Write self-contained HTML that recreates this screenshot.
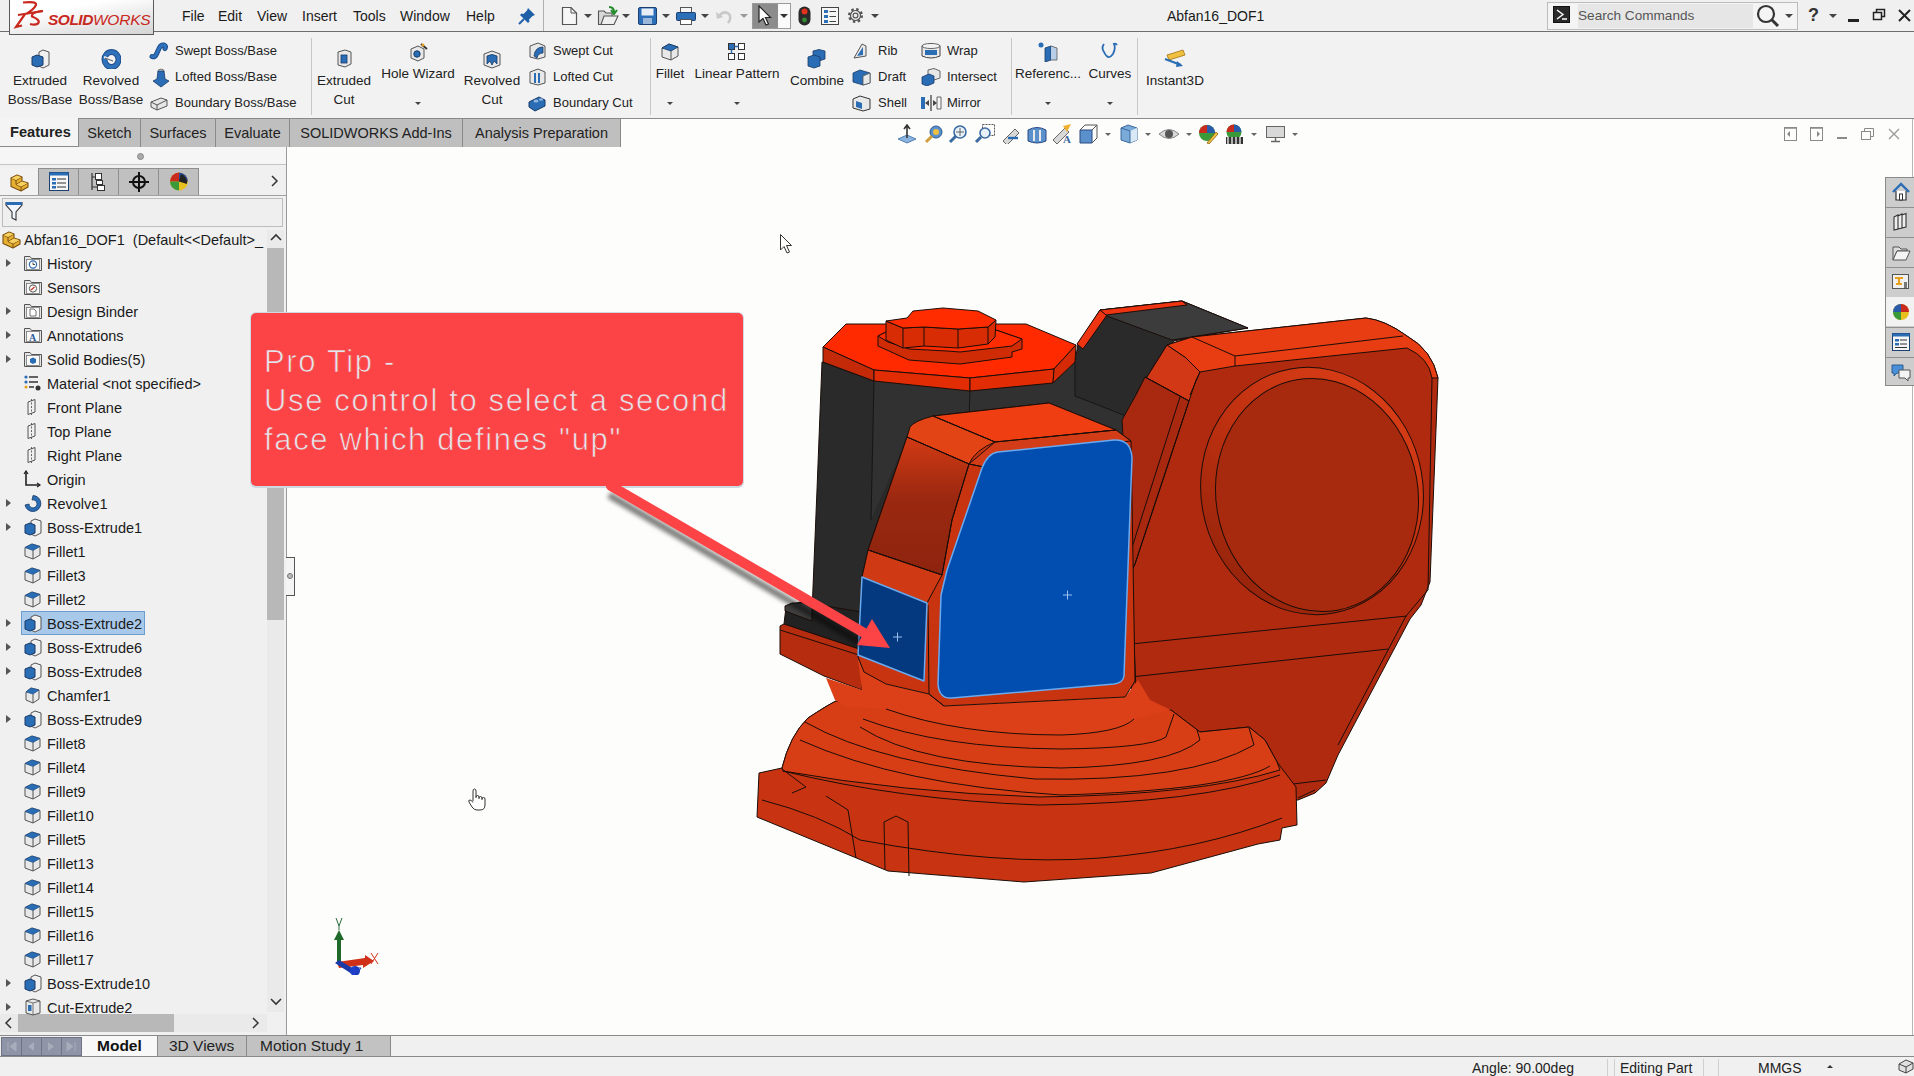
<!DOCTYPE html>
<html><head><meta charset="utf-8">
<style>
*{margin:0;padding:0;box-sizing:border-box}
html,body{width:1914px;height:1076px;overflow:hidden;background:#fdfdfb;font-family:"Liberation Sans",sans-serif;color:#1a1a1a}
.a{position:absolute;white-space:nowrap}
#top{position:absolute;left:0;top:0;width:1914px;height:32px;background:#f0f0f0;border-bottom:1px solid #6e6e6e}
#cm{position:absolute;left:0;top:32px;width:1914px;height:87px;background:#f2f2f2;border-bottom:1px solid #8a8a8a}
.mi{font-size:14px;top:8px}
.lbl{font-size:13.5px;color:#222;text-align:center;line-height:19px}
.sep{position:absolute;width:1px;background:#c8c8c8}
#tabs{position:absolute;left:0;top:118px;width:1914px;height:29px}
.tab{position:absolute;top:0;height:29px;background:#bfbfbf;border-right:1px solid #a8a8a8;font-size:14.5px;line-height:28px;text-align:center;color:#222}
#left{position:absolute;left:0;top:147px;width:287px;height:888px;background:#f0f0f0;border-right:1px solid #9a9a9a}
.ti{position:absolute;left:47px;font-size:14.5px;line-height:18px;color:#1a1a1a}
.ex{position:absolute;left:6px;width:0;height:0;border-left:5px solid #555;border-top:4px solid transparent;border-bottom:4px solid transparent}
#vp{position:absolute;left:287px;top:118px;width:1627px;height:917px;background:#fdfdfb}
#btabs{position:absolute;left:0;top:1035px;width:1914px;height:22px;background:#f0f0f0;border-top:1px solid #8a8a8a;border-bottom:1px solid #8a8a8a}
#status{position:absolute;left:0;top:1057px;width:1914px;height:19px;background:#f0f0f0}
</style></head><body>
<div id="vp"></div>
<div id="top">
<div class="a" style="left:9px;top:0;width:145px;height:35px;border:1px solid #5a5a5a;border-top:none;background:linear-gradient(170deg,#ffffff 30%,#e6e6e6 70%,#d4d4d4);z-index:3"></div>
<svg class="a" style="left:0;top:0;z-index:4" width="48" height="32" viewBox="0 0 48 32"><path d="M23 2.5 Q37 1 36 5 Q34 9 27 13.5" fill="none" stroke="#c8281e" stroke-width="2.2"/><path d="M18 15 L43 11" fill="none" stroke="#c8281e" stroke-width="2"/><path d="M25 14 L16 27 L22 25.5" fill="none" stroke="#c8281e" stroke-width="2.2"/><path d="M43 11 Q31 12 32 16.5 Q41 20 38 23.5 Q35 25.5 30 24" fill="none" stroke="#c8281e" stroke-width="2.2"/></svg>
<div class="a" style="left:48px;top:12px;z-index:4;font-size:15.5px;line-height:16px;color:#c8281e;font-style:italic;letter-spacing:-0.2px"><b style="letter-spacing:-0.5px">SOLID</b><span style="font-weight:normal">WORKS</span></div>
<div class="a mi" style="left:182px">File</div>
<div class="a mi" style="left:218px">Edit</div>
<div class="a mi" style="left:257px">View</div>
<div class="a mi" style="left:302px">Insert</div>
<div class="a mi" style="left:353px">Tools</div>
<div class="a mi" style="left:400px">Window</div>
<div class="a mi" style="left:466px">Help</div>
<svg class="a" style="left:517px;top:6px" width="20" height="20"><path d="M11 2 L18 9 L15.5 10 L12 13.5 L12.5 15.5 L11 17 L3 9 L4.5 7.5 L6.5 8 L10 4.5 Z" fill="#1f5fa8"/><path d="M7 13 L2 18" stroke="#1f5fa8" stroke-width="2"/></svg>
<div class="sep" style="left:543px;top:0;height:31px;background:#b0b0b0"></div>

<svg class="a" style="left:561px;top:6px" width="17" height="20"><path d="M1.5 1.5 H10 L15.5 7 V18.5 H1.5 Z" fill="#f6f6f6" stroke="#555" stroke-width="1.2"/><path d="M10 1.5 V7 H15.5" fill="none" stroke="#555"/></svg>
<div class="a" style="left:584px;top:14px;border-left:4px solid transparent;border-right:4px solid transparent;border-top:4px solid #444"></div>
<svg class="a" style="left:597px;top:6px" width="22" height="20"><path d="M1.5 5 H7 L9 7 H15 V18.5 H1.5 Z" fill="#d8d8d8" stroke="#555" stroke-width="1.1"/><path d="M4 18.5 L7 10 H21 L17 18.5 Z" fill="#efefef" stroke="#555" stroke-width="1.1"/><path d="M12 1 Q17 1 17 6 M14 4 L17 8 L20 4" fill="none" stroke="#1e8a2a" stroke-width="2"/></svg>
<div class="a" style="left:622px;top:14px;border-left:4px solid transparent;border-right:4px solid transparent;border-top:4px solid #444"></div>
<svg class="a" style="left:638px;top:7px" width="19" height="18"><rect x="0.5" y="0.5" width="18" height="17" rx="1.5" fill="#2a6fb8" stroke="#1a3f70"/><rect x="3.5" y="1.5" width="12" height="7" fill="#e8eef6"/><rect x="5" y="11" width="9" height="6" fill="#9ab6d8"/></svg>
<div class="a" style="left:662px;top:14px;border-left:4px solid transparent;border-right:4px solid transparent;border-top:4px solid #444"></div>
<svg class="a" style="left:676px;top:7px" width="20" height="18"><rect x="4.5" y="0.5" width="11" height="5" fill="#f4f4f4" stroke="#555"/><rect x="0.5" y="5.5" width="19" height="8" rx="1" fill="#2a6fb8" stroke="#1a3f70"/><rect x="4.5" y="12.5" width="11" height="5" fill="#fff" stroke="#555"/></svg>
<div class="a" style="left:701px;top:14px;border-left:4px solid transparent;border-right:4px solid transparent;border-top:4px solid #444"></div>
<svg class="a" style="left:715px;top:8px" width="17" height="16"><path d="M4 8 Q9 2 14 6 Q17 10 13 15" fill="none" stroke="#c8c8c8" stroke-width="2.5"/><path d="M1 4 L2 11 L8 9 Z" fill="#c8c8c8"/></svg>
<div class="a" style="left:740px;top:14px;border-left:4px solid transparent;border-right:4px solid transparent;border-top:4px solid #999"></div>
<div class="a" style="left:752px;top:3px;width:39px;height:26px;border:1px solid #9a9a9a;background:#fafafa"></div>
<div class="a" style="left:753px;top:4px;width:25px;height:24px;background:#8c8c8c"></div>
<svg class="a" style="left:757px;top:5px" width="16" height="22"><path d="M2 1 L2 17 L6 13.5 L9 20 L11.5 19 L8.5 12.5 L13.5 12.5 Z" fill="#fff" stroke="#222" stroke-width="1.2"/></svg>
<div class="a" style="left:780px;top:14px;border-left:4px solid transparent;border-right:4px solid transparent;border-top:4px solid #333"></div>
<svg class="a" style="left:798px;top:6px" width="13" height="20"><rect x="0.5" y="0.5" width="12" height="19" rx="6" fill="#2a2a2a"/><circle cx="6.5" cy="5.5" r="3" fill="#e0301e"/><circle cx="6.5" cy="14" r="2.4" fill="#2f8a30"/></svg>
<svg class="a" style="left:821px;top:7px" width="18" height="18"><rect x="0.5" y="0.5" width="17" height="17" fill="#f6f6f6" stroke="#444"/><rect x="3" y="3" width="4" height="3" fill="#2a6fb8"/><rect x="3" y="8" width="4" height="3" fill="#2a6fb8"/><rect x="3" y="13" width="4" height="3" fill="#2a6fb8"/><path d="M8.5 4.5 H15 M8.5 9.5 H15 M8.5 14.5 H15" stroke="#444"/></svg>
<svg class="a" style="left:846px;top:6px" width="19" height="19"><circle cx="9.5" cy="9.5" r="6.2" fill="none" stroke="#555" stroke-width="2.6" stroke-dasharray="2.4 2.46"/><circle cx="9.5" cy="9.5" r="5" fill="none" stroke="#555" stroke-width="1.2"/><circle cx="9.5" cy="9.5" r="2.4" fill="none" stroke="#555" stroke-width="1.2"/></svg>
<div class="a" style="left:871px;top:14px;border-left:4px solid transparent;border-right:4px solid transparent;border-top:4px solid #444"></div>

<div class="a" style="left:1167px;top:8px;font-size:14px">Abfan16_DOF1</div>
<div class="a" style="left:1547px;top:2px;width:251px;height:28px;border:1px solid #bcbcbc;background:#f4f4f4"></div>
<div class="a" style="left:1578px;top:4px;width:175px;height:24px;background:#e6e6e6"></div>
<div class="a" style="left:1553px;top:6px;width:17px;height:17px;background:#2a2a2a;border:1px solid #111"></div>
<svg class="a" style="left:1553px;top:6px" width="17" height="17"><path d="M4 4 L10 8.5 L4 13 M9 13 L14 13" stroke="#fff" stroke-width="1.4" fill="none"/></svg>
<div class="a" style="left:1578px;top:8px;font-size:13.6px;color:#555">Search Commands</div>
<svg class="a" style="left:1755px;top:3px" width="28" height="26"><circle cx="11" cy="11" r="8" fill="none" stroke="#333" stroke-width="2.2"/><path d="M17 17 L23 23" stroke="#333" stroke-width="3"/></svg>
<div class="a" style="left:1785px;top:14px;border-left:4px solid transparent;border-right:4px solid transparent;border-top:4px solid #444"></div>
<div class="a" style="left:1808px;top:5px;font-size:18px;font-weight:bold;color:#333">?</div>
<div class="a" style="left:1829px;top:14px;border-left:4px solid transparent;border-right:4px solid transparent;border-top:4px solid #444"></div>
<div class="a" style="left:1848px;top:19px;width:11px;height:3px;background:#222"></div>
<svg class="a" style="left:1872px;top:8px" width="16" height="14"><rect x="1.5" y="4.5" width="8" height="7" fill="none" stroke="#222" stroke-width="1.5"/><path d="M4.5 4.5 V1.5 H12.5 V8.5 H9.5" fill="none" stroke="#222" stroke-width="1.5"/></svg>
<svg class="a" style="left:1898px;top:9px" width="14" height="14"><path d="M1 1 L12 12 M12 1 L1 12" stroke="#222" stroke-width="2"/></svg>
</div>
<div id="cm"></div>
<svg class="a" style="left:31px;top:49px" width="20" height="20"><path d="M8 3 L12 1 L18 3 V16 L12 19 L8 17 Z" fill="#f0f0f0" stroke="#555" stroke-width="1"/><path d="M1 8 L6 6 L12 8 V16 L6 18 L1 16 Z" fill="#2a6db5" stroke="#173a66" stroke-width="1"/></svg>
<div class="a lbl" style="left:-20px;top:71px;width:120px">Extruded</div>
<div class="a lbl" style="left:-20px;top:90px;width:120px">Boss/Base</div>
<svg class="a" style="left:101px;top:49px" width="20" height="20"><ellipse cx="10.5" cy="10.5" rx="7" ry="7.5" fill="none" stroke="#1d4f8a" stroke-width="6"/><ellipse cx="10.5" cy="10.5" rx="7" ry="7.5" fill="none" stroke="#2f72bb" stroke-width="4"/><path d="M3 8 L13 12" stroke="#f2f2f2" stroke-width="2.2"/><path d="M4 9 L12 12" stroke="#333" stroke-width="0.8"/></svg>
<div class="a lbl" style="left:51px;top:71px;width:120px">Revolved</div>
<div class="a lbl" style="left:51px;top:90px;width:120px">Boss/Base</div>
<svg class="a" style="left:149px;top:42px" width="20" height="18"><path d="M3 14.5 Q6 16 8 11 L10.5 5.5 Q12 2.5 15 3 Q17.5 4 16 6.5" fill="none" stroke="#1d4f8a" stroke-width="5" stroke-linecap="round"/><path d="M3 14.5 Q6 16 8 11 L10.5 5.5 Q12 2.5 15 3 Q17.5 4 16 6.5" fill="none" stroke="#2f72bb" stroke-width="3" stroke-linecap="round"/></svg>
<div class="a" style="left:175px;top:43px;font-size:13px;color:#222">Swept Boss/Base</div>
<svg class="a" style="left:152px;top:68px" width="18" height="20"><ellipse cx="9" cy="3" rx="3" ry="1.8" fill="#e0e0e0" stroke="#555" stroke-width="0.8"/><path d="M6 3 L5 11 L1 13 L9 19 L17 13 L13 11 L12 3 Z" fill="#2a6db5" stroke="#173a66" stroke-width="0.8"/></svg>
<div class="a" style="left:175px;top:69px;font-size:13px;color:#222">Lofted Boss/Base</div>
<svg class="a" style="left:149px;top:94px" width="20" height="18"><path d="M2 8 L12 4 L18 6 V12 L8 16 L2 13 Z" fill="#e6e6e6" stroke="#555" stroke-width="1"/><path d="M2 8 L8 11 L18 6 M8 11 V16" fill="none" stroke="#555"/></svg>
<div class="a" style="left:175px;top:95px;font-size:13px;color:#222">Boundary Boss/Base</div>
<div class="sep" style="left:311px;top:38px;height:77px"></div>
<svg class="a" style="left:335px;top:49px" width="18" height="19"><path d="M3 3 L10 1 L16 3 V15 L10 18 L3 16 Z" fill="#e8e8e8" stroke="#555"/><rect x="6" y="6" width="6" height="8" fill="#2a6db5" stroke="#173a66" stroke-width="0.8"/></svg>
<div class="a lbl" style="left:284px;top:71px;width:120px">Extruded</div>
<div class="a lbl" style="left:284px;top:90px;width:120px">Cut</div>
<svg class="a" style="left:408px;top:42px" width="20" height="21"><path d="M3 7 L10 4 L16 7 V16 L10 19 L3 16 Z" fill="#e8e8e8" stroke="#555"/><circle cx="9" cy="12" r="3.2" fill="#2a6db5" stroke="#173a66"/><path d="M13 2 L19 7" stroke="#333" stroke-width="2"/><circle cx="15" cy="3" r="1.5" fill="#e8a020"/></svg>
<div class="a lbl" style="left:358px;top:64px;width:120px">Hole Wizard</div>
<div class="a" style="left:415px;top:102px;border-left:3px solid transparent;border-right:3px solid transparent;border-top:3px solid #444"></div>
<svg class="a" style="left:482px;top:49px" width="20" height="20"><path d="M2 5 L10 2 L18 5 V16 L10 19 L2 16 Z" fill="#e8e8e8" stroke="#555"/><path d="M5 7 Q10 4 15 7 V15 L12 12 L10 16 L8 12 L5 15 Z" fill="#2a6db5" stroke="#173a66" stroke-width="0.8"/></svg>
<div class="a lbl" style="left:432px;top:71px;width:120px">Revolved</div>
<div class="a lbl" style="left:432px;top:90px;width:120px">Cut</div>
<svg class="a" style="left:528px;top:42px" width="19" height="18"><path d="M2 4 L10 1 L17 4 V15 L10 17 L2 15 Z" fill="#e8e8e8" stroke="#555"/><path d="M6 14 Q7 5 15 5 V11 Q10 11 9 16 Z" fill="#2a6db5" stroke="#173a66" stroke-width="0.8"/></svg>
<div class="a" style="left:553px;top:43px;font-size:13px;color:#222">Swept Cut</div>
<svg class="a" style="left:528px;top:68px" width="19" height="18"><path d="M2 4 L10 1 L17 4 V15 L10 17 L2 15 Z" fill="#e8e8e8" stroke="#555"/><path d="M7 5 V15 M11 5 V15" stroke="#2a6db5" stroke-width="2"/></svg>
<div class="a" style="left:553px;top:69px;font-size:13px;color:#222">Lofted Cut</div>
<svg class="a" style="left:527px;top:94px" width="20" height="18"><path d="M2 8 L12 3 L18 6 V12 L8 17 L2 13 Z" fill="#2a6db5" stroke="#173a66" stroke-width="1"/><ellipse cx="9" cy="7" rx="2.5" ry="1.5" fill="#8fb6e0"/><ellipse cx="14" cy="5.5" rx="2" ry="1.2" fill="#8fb6e0"/></svg>
<div class="a" style="left:553px;top:95px;font-size:13px;color:#222">Boundary Cut</div>
<div class="sep" style="left:650px;top:38px;height:77px"></div>
<svg class="a" style="left:660px;top:42px" width="20" height="20"><path d="M2 6 L9 2 L18 5 V14 L11 18 L2 15 Z" fill="#e8e8e8" stroke="#555"/><path d="M2 6 L11 9 L18 5 L9 2 Z" fill="#2a6db5" stroke="#173a66" stroke-width="0.8"/><path d="M11 9 V18" stroke="#555"/></svg>
<div class="a lbl" style="left:610px;top:64px;width:120px">Fillet</div>
<div class="a" style="left:667px;top:102px;border-left:3px solid transparent;border-right:3px solid transparent;border-top:3px solid #444"></div>
<svg class="a" style="left:727px;top:42px" width="20" height="20"><rect x="1.5" y="1.5" width="6" height="6" fill="#2a6db5" stroke="#333"/><rect x="11.5" y="1.5" width="6" height="6" fill="#fff" stroke="#333"/><rect x="1.5" y="11.5" width="6" height="6" fill="#fff" stroke="#333"/><rect x="11.5" y="11.5" width="6" height="6" fill="#fff" stroke="#333"/><path d="M7.5 4.5 H11.5 M4.5 7.5 V11.5" stroke="#2a6db5" stroke-width="1.5"/></svg>
<div class="a lbl" style="left:677px;top:64px;width:120px">Linear Pattern</div>
<div class="a" style="left:734px;top:102px;border-left:3px solid transparent;border-right:3px solid transparent;border-top:3px solid #444"></div>
<svg class="a" style="left:807px;top:49px" width="20" height="20"><path d="M6 2 L12 0.5 L18 2 V10 L12 12 L6 10 Z" fill="#2a6db5" stroke="#173a66" stroke-width="0.8"/><path d="M1 8 L7 6 L13 8 V17 L7 19 L1 17 Z" fill="#2a6db5" stroke="#173a66" stroke-width="0.8"/></svg>
<div class="a lbl" style="left:757px;top:71px;width:120px">Combine</div>
<svg class="a" style="left:852px;top:42px" width="20" height="18"><path d="M2 16 L10 2 L14 4 L14 14 Z" fill="#e8e8e8" stroke="#555"/><path d="M5 14 L11 5 V13 Z" fill="#2a6db5"/></svg>
<div class="a" style="left:878px;top:43px;font-size:13px;color:#222">Rib</div>
<svg class="a" style="left:852px;top:68px" width="20" height="18"><path d="M1 5 L8 2 L18 5 V15 L11 17 L1 14 Z" fill="#2a6db5" stroke="#173a66" stroke-width="0.8"/><path d="M11 8 L18 5 V15 L11 17 Z" fill="#e8e8e8" stroke="#555" stroke-width="0.8"/></svg>
<div class="a" style="left:878px;top:69px;font-size:13px;color:#222">Draft</div>
<svg class="a" style="left:852px;top:94px" width="20" height="18"><path d="M1 5 L8 2 L18 5 V15 L11 17 L1 14 Z" fill="#e8e8e8" stroke="#333" stroke-width="1"/><path d="M4 7 L10 9 V15 L4 13 Z" fill="#2a6db5"/></svg>
<div class="a" style="left:878px;top:95px;font-size:13px;color:#222">Shell</div>
<svg class="a" style="left:920px;top:42px" width="22" height="18"><path d="M2 4 Q11 0 20 4 V14 Q11 18 2 14 Z" fill="#e8e8e8" stroke="#444"/><ellipse cx="11" cy="4" rx="9" ry="2.5" fill="#f4f4f4" stroke="#444" stroke-width="0.8"/><rect x="5" y="8" width="12" height="5" fill="#2a6db5"/></svg>
<div class="a" style="left:947px;top:43px;font-size:13px;color:#222">Wrap</div>
<svg class="a" style="left:920px;top:68px" width="22" height="18"><path d="M8 2 L14 0.5 L20 3 V10 L14 12 L8 10 Z" fill="#e8e8e8" stroke="#444" stroke-width="0.8"/><path d="M2 9 L9 6 L14 8 V15 L7 18 L2 16 Z" fill="#2a6db5" stroke="#173a66" stroke-width="0.8"/></svg>
<div class="a" style="left:947px;top:69px;font-size:13px;color:#222">Intersect</div>
<svg class="a" style="left:920px;top:94px" width="22" height="18"><path d="M1 3 H5 V15 H1 Z" fill="#2a6db5"/><path d="M17 3 H21 V15 H17 Z" fill="#f4f4f4" stroke="#444" stroke-width="0.8"/><path d="M11 1 V17" stroke="#333" stroke-width="1.2"/><path d="M5 9 L9 6 V12 Z M17 9 L13 6 V12 Z" fill="#444"/></svg>
<div class="a" style="left:947px;top:95px;font-size:13px;color:#222">Mirror</div>
<div class="sep" style="left:1011px;top:38px;height:77px"></div>
<svg class="a" style="left:1037px;top:42px" width="22" height="20"><circle cx="4" cy="3" r="2.5" fill="#2a6db5"/><path d="M8 6 L14 4 V18 L8 20 Z" fill="#2a6db5" stroke="#173a66" stroke-width="0.8"/><path d="M14 4 L20 6 V18 L14 18" fill="#b8cde6" stroke="#555" stroke-width="0.8"/></svg>
<div class="a lbl" style="left:988px;top:64px;width:120px">Referenc...</div>
<div class="a" style="left:1045px;top:102px;border-left:3px solid transparent;border-right:3px solid transparent;border-top:3px solid #444"></div>
<svg class="a" style="left:1099px;top:42px" width="22" height="20"><path d="M5 2 Q2 6 5 10 Q9 19 14 12 Q17 6 15 2 M14 2 Q17 1 18 3" fill="none" stroke="#2a6db5" stroke-width="1.8"/></svg>
<div class="a lbl" style="left:1050px;top:64px;width:120px">Curves</div>
<div class="a" style="left:1107px;top:102px;border-left:3px solid transparent;border-right:3px solid transparent;border-top:3px solid #444"></div>
<div class="sep" style="left:1137px;top:38px;height:77px"></div>
<svg class="a" style="left:1163px;top:49px" width="24" height="20"><path d="M4 6 L20 1 L22 6 L6 11 Z" fill="#f0c040" stroke="#a07010" stroke-width="0.8"/><path d="M2 10 L18 16" stroke="#2a6db5" stroke-width="2.2"/><path d="M14 12 L20 17 L13 18 Z" fill="#2a6db5"/></svg>
<div class="a lbl" style="left:1115px;top:71px;width:120px">Instant3D</div>
<div id="tabs">
<div class="a" style="left:0;top:28px;width:621px;height:1px;background:#8a8a8a"></div>
<div class="a" style="left:0;top:0;width:78px;height:28px;background:#f4f4f4"></div>
<div class="a" style="left:10px;top:6px;font-size:14.6px;font-weight:bold;color:#222">Features</div>
<div class="tab" style="left:78px;width:63px;border-left:1px solid #8a8a8a;border-top:1px solid #8a8a8a">Sketch</div>
<div class="tab" style="left:140px;width:76px;border-top:1px solid #8a8a8a;border-left:1px solid #8a8a8a">Surfaces</div>
<div class="tab" style="left:215px;width:75px;border-top:1px solid #8a8a8a;border-left:1px solid #8a8a8a">Evaluate</div>
<div class="tab" style="left:289px;width:174px;border-top:1px solid #8a8a8a;border-left:1px solid #8a8a8a">SOLIDWORKS Add-Ins</div>
<div class="tab" style="left:462px;width:159px;border-top:1px solid #8a8a8a;border-left:1px solid #8a8a8a;border-right:1px solid #8a8a8a">Analysis Preparation</div>
</div>
<div id="left">
<div class="a" style="left:0;top:0;width:286px;height:18px;background:#f6f6f6;border-bottom:1px solid #c4c4c4"></div>
<div class="a" style="left:137px;top:6px;width:7px;height:7px;border-radius:50%;background:#aaa;border:1px solid #888"></div>
<div class="a" style="left:0;top:48px;width:286px;height:1px;background:#a0a0a0"></div>
<div class="a" style="left:0;top:21px;width:38px;height:27px;background:#f2f2f2"></div>
<div class="a" style="left:38px;top:21px;width:161px;height:27px;background:#c0c0c0;border:1px solid #8f8f8f;border-bottom:none"></div>
<div class="a" style="left:78px;top:21px;width:1px;height:27px;background:#8f8f8f"></div>
<div class="a" style="left:118px;top:21px;width:1px;height:27px;background:#8f8f8f"></div>
<div class="a" style="left:158px;top:21px;width:1px;height:27px;background:#8f8f8f"></div>
<div class="a" style="left:2px;top:51px;width:281px;height:29px;background:#efefef;border:1px solid #bdbdbd"></div>
<div class="a" style="left:267px;top:83px;width:17px;height:782px;background:#eaeaea"></div>
<div class="a" style="left:267px;top:101px;width:17px;height:372px;background:#b8b8b8"></div>
<div class="a" style="left:0;top:867px;width:267px;height:18px;background:#eaeaea"></div>
<div class="a" style="left:18px;top:867px;width:156px;height:18px;background:#b8b8b8"></div>
</div>
<svg class="a" style="left:9px;top:171px" width="22" height="22"><path d="M2 7 L8 4 L13 6 V10 L19 12 V16 L12 20 L2 15.5 Z" fill="#e8b030" stroke="#7a5010" stroke-width="1.1" stroke-linejoin="round"/><path d="M2 7 L7 9.5 L13 6 M7 9.5 V13.5 L13 10 M7 13.5 L12 16 L19 12 M12 16 V20" fill="none" stroke="#7a5010" stroke-width="1"/><path d="M2.5 7.3 L8 4.5 L12.5 6.3 L7 9 Z M7.5 13.6 L13 10.4 L18.5 12.2 L12 15.6 Z" fill="#f6d060"/></svg>
<svg class="a" style="left:49px;top:172px" width="20" height="19"><rect x="0.5" y="0.5" width="19" height="18" fill="#f6f6f6" stroke="#1a3f70"/><rect x="0.5" y="0.5" width="19" height="3" fill="#2a6db5"/><rect x="3" y="6" width="4" height="2.5" fill="#2a6db5"/><rect x="3" y="10" width="4" height="2.5" fill="#2a6db5"/><rect x="3" y="14" width="4" height="2.5" fill="#2a6db5"/><path d="M8 7 H17 M8 11 H17 M8 15 H17" stroke="#333"/></svg>
<svg class="a" style="left:90px;top:172px" width="16" height="20"><path d="M2 1 V18 M2 5 H6 M2 15 H7" stroke="#333" stroke-width="1.2" fill="none"/><rect x="5.5" y="1.5" width="6" height="6" fill="#fff" stroke="#333"/><rect x="6.5" y="8.5" width="6" height="4" fill="#fff" stroke="#333"/><rect x="7.5" y="13.5" width="7" height="5" fill="#fff" stroke="#333"/></svg>
<svg class="a" style="left:129px;top:172px" width="20" height="20"><circle cx="10" cy="10" r="6" fill="none" stroke="#111" stroke-width="2"/><path d="M10 0 V20 M0 10 H20" stroke="#111" stroke-width="2"/></svg>
<svg class="a" style="left:169px;top:171px" width="20" height="21"><circle cx="10" cy="10.5" r="9" fill="#e8c020"/><path d="M10 10.5 L1 10.5 A9 9 0 0 1 10 1.5 Z" fill="#c82a1e"/><path d="M10 10.5 L10 1.5 A9 9 0 0 1 19 10.5 Z" fill="#2a4a9a"/><path d="M10 10.5 L1 10.5 A9 9 0 0 0 10 19.5 Z" fill="#3a9a3a"/><path d="M10 10.5 L12 3 A9 9 0 0 1 18 13 Z" fill="#222"/></svg>
<svg class="a" style="left:270px;top:175px" width="10" height="12"><path d="M2 1 L7 6 L2 11" fill="none" stroke="#333" stroke-width="1.5"/></svg>
<svg class="a" style="left:5px;top:201px" width="18" height="20"><path d="M1 1.5 H17 V4 L11 11 V19 L7 17 V11 L1 4 Z" fill="#f0f6fc" stroke="#333" stroke-width="1.1"/><rect x="1" y="1" width="16" height="3" fill="#2a6db5"/></svg>
<svg class="a" style="left:1px;top:228px" width="22" height="22"><path d="M2 7 L8 4 L13 6 V10 L19 12 V16 L12 20 L2 15.5 Z" fill="#e8b030" stroke="#7a5010" stroke-width="1.1" stroke-linejoin="round"/><path d="M2 7 L7 9.5 L13 6 M7 9.5 V13.5 L13 10 M7 13.5 L12 16 L19 12 M12 16 V20" fill="none" stroke="#7a5010" stroke-width="1"/><path d="M2.5 7.3 L8 4.5 L12.5 6.3 L7 9 Z M7.5 13.6 L13 10.4 L18.5 12.2 L12 15.6 Z" fill="#f6d060"/></svg>
<div class="a" style="left:24px;top:231px;font-size:14.5px;line-height:18px">Abfan16_DOF1&nbsp; (Default&lt;&lt;Default&gt;_</div>
<svg class="a" style="left:270px;top:233px" width="12" height="9"><path d="M1 7 L6 2 L11 7" fill="none" stroke="#333" stroke-width="1.6"/></svg>
<svg class="a" style="left:270px;top:997px" width="12" height="9"><path d="M1 2 L6 7 L11 2" fill="none" stroke="#333" stroke-width="1.6"/></svg>
<svg class="a" style="left:4px;top:1017px" width="9" height="12"><path d="M7 1 L2 6 L7 11" fill="none" stroke="#333" stroke-width="1.5"/></svg>
<svg class="a" style="left:251px;top:1017px" width="9" height="12"><path d="M2 1 L7 6 L2 11" fill="none" stroke="#333" stroke-width="1.5"/></svg>
<div class="ex" style="top:259px"></div>
<svg class="a" style="left:23px;top:254px" width="20" height="19"><path d="M1.5 2.5 H7 L8.5 4.5 H18.5 V16.5 H1.5 Z" fill="#e6e6e6" stroke="#555" stroke-width="1"/><rect x="3.5" y="5.5" width="13" height="10" fill="#f8f8f8" stroke="#777" stroke-width="0.8"/><circle cx="10" cy="10.5" r="3.6" fill="#fff" stroke="#2a6db5" stroke-width="1.2"/><path d="M10 8.5 V10.5 H12" stroke="#333" stroke-width="0.9" fill="none"/></svg>
<div class="ti" style="top:255px">History</div>
<svg class="a" style="left:23px;top:278px" width="20" height="19"><path d="M1.5 2.5 H7 L8.5 4.5 H18.5 V16.5 H1.5 Z" fill="#e6e6e6" stroke="#555" stroke-width="1"/><rect x="3.5" y="5.5" width="13" height="10" fill="#f8f8f8" stroke="#777" stroke-width="0.8"/><circle cx="10" cy="10.5" r="3.6" fill="#fff" stroke="#555" stroke-width="1"/><path d="M8 12 L11.5 9" stroke="#d03020" stroke-width="1.4"/></svg>
<div class="ti" style="top:279px">Sensors</div>
<div class="ex" style="top:307px"></div>
<svg class="a" style="left:23px;top:302px" width="20" height="19"><path d="M1.5 2.5 H7 L8.5 4.5 H18.5 V16.5 H1.5 Z" fill="#e6e6e6" stroke="#555" stroke-width="1"/><rect x="3.5" y="5.5" width="13" height="10" fill="#f8f8f8" stroke="#777" stroke-width="0.8"/><path d="M7 7 H11 L13 9 V14 H7 Z" fill="#fff" stroke="#666" stroke-width="0.9"/></svg>
<div class="ti" style="top:303px">Design Binder</div>
<div class="ex" style="top:331px"></div>
<svg class="a" style="left:23px;top:326px" width="20" height="19"><path d="M1.5 2.5 H7 L8.5 4.5 H18.5 V16.5 H1.5 Z" fill="#e6e6e6" stroke="#555" stroke-width="1"/><rect x="3.5" y="5.5" width="13" height="10" fill="#f8f8f8" stroke="#777" stroke-width="0.8"/><text x="6" y="15" font-family="Liberation Serif" font-size="10" font-weight="bold" fill="#2a5a9a">A</text></svg>
<div class="ti" style="top:327px">Annotations</div>
<div class="ex" style="top:355px"></div>
<svg class="a" style="left:23px;top:350px" width="20" height="19"><path d="M1.5 2.5 H7 L8.5 4.5 H18.5 V16.5 H1.5 Z" fill="#e6e6e6" stroke="#555" stroke-width="1"/><rect x="3.5" y="5.5" width="13" height="10" fill="#f8f8f8" stroke="#777" stroke-width="0.8"/><path d="M7 9 L10 7.5 L13 9 V12.5 L10 14 L7 12.5 Z" fill="#2a6db5"/></svg>
<div class="ti" style="top:351px">Solid Bodies(5)</div>
<svg class="a" style="left:23px;top:374px" width="20" height="19"><circle cx="3" cy="3" r="1.6" fill="#2a6db5"/><circle cx="3" cy="8" r="1.6" fill="#2a6db5"/><circle cx="3" cy="13" r="1.6" fill="#e8a020"/><path d="M6 3 H15 M6 8 H15 M6 13 H11" stroke="#333" stroke-width="1.3"/><circle cx="15" cy="14" r="2.5" fill="#333"/></svg>
<div class="ti" style="top:375px">Material &lt;not specified&gt;</div>
<svg class="a" style="left:23px;top:398px" width="20" height="19"><path d="M5 4 L12 1.5 V14 L5 16.5 Z" fill="none" stroke="#555" stroke-width="1"/><path d="M8.5 1 V17" stroke="#555" stroke-width="0.9" stroke-dasharray="2 1.5"/></svg>
<div class="ti" style="top:399px">Front Plane</div>
<svg class="a" style="left:23px;top:422px" width="20" height="19"><path d="M5 4 L12 1.5 V14 L5 16.5 Z" fill="none" stroke="#555" stroke-width="1"/><path d="M8.5 1 V17" stroke="#555" stroke-width="0.9" stroke-dasharray="2 1.5"/></svg>
<div class="ti" style="top:423px">Top Plane</div>
<svg class="a" style="left:23px;top:446px" width="20" height="19"><path d="M5 4 L12 1.5 V14 L5 16.5 Z" fill="none" stroke="#555" stroke-width="1"/><path d="M8.5 1 V17" stroke="#555" stroke-width="0.9" stroke-dasharray="2 1.5"/></svg>
<div class="ti" style="top:447px">Right Plane</div>
<svg class="a" style="left:23px;top:470px" width="20" height="19"><path d="M3 1 V15 H17" fill="none" stroke="#222" stroke-width="1.6"/><path d="M1 4 L3 1 L5 4 M14 13 L17 15 L14 17" fill="none" stroke="#222" stroke-width="1.2"/></svg>
<div class="ti" style="top:471px">Origin</div>
<div class="ex" style="top:499px"></div>
<svg class="a" style="left:23px;top:494px" width="20" height="19"><path d="M10 1.5 A8 8 0 1 1 2 11 L6 10 A4 4 0 1 0 9 6 Z" fill="#2a6db5" stroke="#173a66" stroke-width="0.8"/><path d="M3 8 L13 11" stroke="#e8e8e8" stroke-width="1"/></svg>
<div class="ti" style="top:495px">Revolve1</div>
<div class="ex" style="top:523px"></div>
<svg class="a" style="left:23px;top:518px" width="20" height="19"><path d="M8 3 L12 1 L18 3 V15 L12 18 L8 16 Z" fill="#f0f0f0" stroke="#555" stroke-width="1"/><path d="M2 7 L7 5 L12 7 V15 L7 17 L2 15 Z" fill="#2a6db5" stroke="#173a66" stroke-width="1"/></svg>
<div class="ti" style="top:519px">Boss-Extrude1</div>
<svg class="a" style="left:23px;top:542px" width="20" height="19"><path d="M2 5.5 L9 2 L17 4.5 V13 L10 17 L2 14 Z" fill="#e8e8e8" stroke="#555" stroke-width="1"/><path d="M2 5.5 L10 8.5 L17 4.5 L9 2 Z" fill="#2a6db5" stroke="#1d4f8a" stroke-width="0.7"/><path d="M10 8.5 V17" stroke="#555" stroke-width="1"/></svg>
<div class="ti" style="top:543px">Fillet1</div>
<svg class="a" style="left:23px;top:566px" width="20" height="19"><path d="M2 5.5 L9 2 L17 4.5 V13 L10 17 L2 14 Z" fill="#e8e8e8" stroke="#555" stroke-width="1"/><path d="M2 5.5 L10 8.5 L17 4.5 L9 2 Z" fill="#2a6db5" stroke="#1d4f8a" stroke-width="0.7"/><path d="M10 8.5 V17" stroke="#555" stroke-width="1"/></svg>
<div class="ti" style="top:567px">Fillet3</div>
<svg class="a" style="left:23px;top:590px" width="20" height="19"><path d="M2 5.5 L9 2 L17 4.5 V13 L10 17 L2 14 Z" fill="#e8e8e8" stroke="#555" stroke-width="1"/><path d="M2 5.5 L10 8.5 L17 4.5 L9 2 Z" fill="#2a6db5" stroke="#1d4f8a" stroke-width="0.7"/><path d="M10 8.5 V17" stroke="#555" stroke-width="1"/></svg>
<div class="ti" style="top:591px">Fillet2</div>
<div class="ex" style="top:619px"></div>
<div class="a" style="left:21px;top:611px;width:124px;height:24px;background:#a9c9ea;border:1px solid #6d9ccf"></div>
<svg class="a" style="left:23px;top:614px" width="20" height="19"><path d="M8 3 L12 1 L18 3 V15 L12 18 L8 16 Z" fill="#f0f0f0" stroke="#555" stroke-width="1"/><path d="M2 7 L7 5 L12 7 V15 L7 17 L2 15 Z" fill="#2a6db5" stroke="#173a66" stroke-width="1"/></svg>
<div class="ti" style="top:615px">Boss-Extrude2</div>
<div class="ex" style="top:643px"></div>
<svg class="a" style="left:23px;top:638px" width="20" height="19"><path d="M8 3 L12 1 L18 3 V15 L12 18 L8 16 Z" fill="#f0f0f0" stroke="#555" stroke-width="1"/><path d="M2 7 L7 5 L12 7 V15 L7 17 L2 15 Z" fill="#2a6db5" stroke="#173a66" stroke-width="1"/></svg>
<div class="ti" style="top:639px">Boss-Extrude6</div>
<div class="ex" style="top:667px"></div>
<svg class="a" style="left:23px;top:662px" width="20" height="19"><path d="M8 3 L12 1 L18 3 V15 L12 18 L8 16 Z" fill="#f0f0f0" stroke="#555" stroke-width="1"/><path d="M2 7 L7 5 L12 7 V15 L7 17 L2 15 Z" fill="#2a6db5" stroke="#173a66" stroke-width="1"/></svg>
<div class="ti" style="top:663px">Boss-Extrude8</div>
<svg class="a" style="left:23px;top:686px" width="20" height="19"><path d="M3 6 L8 2 L16 4 V13 L10 17 L3 14 Z" fill="#e8e8e8" stroke="#555" stroke-width="1"/><path d="M3 6 L10 8 L16 4 L8 2 Z" fill="#2a6db5" stroke="#1d4f8a" stroke-width="0.7"/><path d="M10 8 V17" stroke="#555"/></svg>
<div class="ti" style="top:687px">Chamfer1</div>
<div class="ex" style="top:715px"></div>
<svg class="a" style="left:23px;top:710px" width="20" height="19"><path d="M8 3 L12 1 L18 3 V15 L12 18 L8 16 Z" fill="#f0f0f0" stroke="#555" stroke-width="1"/><path d="M2 7 L7 5 L12 7 V15 L7 17 L2 15 Z" fill="#2a6db5" stroke="#173a66" stroke-width="1"/></svg>
<div class="ti" style="top:711px">Boss-Extrude9</div>
<svg class="a" style="left:23px;top:734px" width="20" height="19"><path d="M2 5.5 L9 2 L17 4.5 V13 L10 17 L2 14 Z" fill="#e8e8e8" stroke="#555" stroke-width="1"/><path d="M2 5.5 L10 8.5 L17 4.5 L9 2 Z" fill="#2a6db5" stroke="#1d4f8a" stroke-width="0.7"/><path d="M10 8.5 V17" stroke="#555" stroke-width="1"/></svg>
<div class="ti" style="top:735px">Fillet8</div>
<svg class="a" style="left:23px;top:758px" width="20" height="19"><path d="M2 5.5 L9 2 L17 4.5 V13 L10 17 L2 14 Z" fill="#e8e8e8" stroke="#555" stroke-width="1"/><path d="M2 5.5 L10 8.5 L17 4.5 L9 2 Z" fill="#2a6db5" stroke="#1d4f8a" stroke-width="0.7"/><path d="M10 8.5 V17" stroke="#555" stroke-width="1"/></svg>
<div class="ti" style="top:759px">Fillet4</div>
<svg class="a" style="left:23px;top:782px" width="20" height="19"><path d="M2 5.5 L9 2 L17 4.5 V13 L10 17 L2 14 Z" fill="#e8e8e8" stroke="#555" stroke-width="1"/><path d="M2 5.5 L10 8.5 L17 4.5 L9 2 Z" fill="#2a6db5" stroke="#1d4f8a" stroke-width="0.7"/><path d="M10 8.5 V17" stroke="#555" stroke-width="1"/></svg>
<div class="ti" style="top:783px">Fillet9</div>
<svg class="a" style="left:23px;top:806px" width="20" height="19"><path d="M2 5.5 L9 2 L17 4.5 V13 L10 17 L2 14 Z" fill="#e8e8e8" stroke="#555" stroke-width="1"/><path d="M2 5.5 L10 8.5 L17 4.5 L9 2 Z" fill="#2a6db5" stroke="#1d4f8a" stroke-width="0.7"/><path d="M10 8.5 V17" stroke="#555" stroke-width="1"/></svg>
<div class="ti" style="top:807px">Fillet10</div>
<svg class="a" style="left:23px;top:830px" width="20" height="19"><path d="M2 5.5 L9 2 L17 4.5 V13 L10 17 L2 14 Z" fill="#e8e8e8" stroke="#555" stroke-width="1"/><path d="M2 5.5 L10 8.5 L17 4.5 L9 2 Z" fill="#2a6db5" stroke="#1d4f8a" stroke-width="0.7"/><path d="M10 8.5 V17" stroke="#555" stroke-width="1"/></svg>
<div class="ti" style="top:831px">Fillet5</div>
<svg class="a" style="left:23px;top:854px" width="20" height="19"><path d="M2 5.5 L9 2 L17 4.5 V13 L10 17 L2 14 Z" fill="#e8e8e8" stroke="#555" stroke-width="1"/><path d="M2 5.5 L10 8.5 L17 4.5 L9 2 Z" fill="#2a6db5" stroke="#1d4f8a" stroke-width="0.7"/><path d="M10 8.5 V17" stroke="#555" stroke-width="1"/></svg>
<div class="ti" style="top:855px">Fillet13</div>
<svg class="a" style="left:23px;top:878px" width="20" height="19"><path d="M2 5.5 L9 2 L17 4.5 V13 L10 17 L2 14 Z" fill="#e8e8e8" stroke="#555" stroke-width="1"/><path d="M2 5.5 L10 8.5 L17 4.5 L9 2 Z" fill="#2a6db5" stroke="#1d4f8a" stroke-width="0.7"/><path d="M10 8.5 V17" stroke="#555" stroke-width="1"/></svg>
<div class="ti" style="top:879px">Fillet14</div>
<svg class="a" style="left:23px;top:902px" width="20" height="19"><path d="M2 5.5 L9 2 L17 4.5 V13 L10 17 L2 14 Z" fill="#e8e8e8" stroke="#555" stroke-width="1"/><path d="M2 5.5 L10 8.5 L17 4.5 L9 2 Z" fill="#2a6db5" stroke="#1d4f8a" stroke-width="0.7"/><path d="M10 8.5 V17" stroke="#555" stroke-width="1"/></svg>
<div class="ti" style="top:903px">Fillet15</div>
<svg class="a" style="left:23px;top:926px" width="20" height="19"><path d="M2 5.5 L9 2 L17 4.5 V13 L10 17 L2 14 Z" fill="#e8e8e8" stroke="#555" stroke-width="1"/><path d="M2 5.5 L10 8.5 L17 4.5 L9 2 Z" fill="#2a6db5" stroke="#1d4f8a" stroke-width="0.7"/><path d="M10 8.5 V17" stroke="#555" stroke-width="1"/></svg>
<div class="ti" style="top:927px">Fillet16</div>
<svg class="a" style="left:23px;top:950px" width="20" height="19"><path d="M2 5.5 L9 2 L17 4.5 V13 L10 17 L2 14 Z" fill="#e8e8e8" stroke="#555" stroke-width="1"/><path d="M2 5.5 L10 8.5 L17 4.5 L9 2 Z" fill="#2a6db5" stroke="#1d4f8a" stroke-width="0.7"/><path d="M10 8.5 V17" stroke="#555" stroke-width="1"/></svg>
<div class="ti" style="top:951px">Fillet17</div>
<div class="ex" style="top:979px"></div>
<svg class="a" style="left:23px;top:974px" width="20" height="19"><path d="M8 3 L12 1 L18 3 V15 L12 18 L8 16 Z" fill="#f0f0f0" stroke="#555" stroke-width="1"/><path d="M2 7 L7 5 L12 7 V15 L7 17 L2 15 Z" fill="#2a6db5" stroke="#173a66" stroke-width="1"/></svg>
<div class="ti" style="top:975px">Boss-Extrude10</div>
<div class="ex" style="top:1003px"></div>
<svg class="a" style="left:23px;top:998px" width="20" height="19"><path d="M3 3 L10 1 L17 3 V15 L10 17 L3 15 Z" fill="#e8e8e8" stroke="#555"/><path d="M3 3 L10 5 L17 3 M10 5 V17" fill="none" stroke="#555" stroke-width="0.8"/><rect x="5" y="7" width="3.5" height="6" fill="#2a6db5"/></svg>
<div class="ti" style="top:999px">Cut-Extrude2</div>

<svg class="a" style="left:897px;top:124px" width="20" height="20"><path d="M1 15 L10 11 L19 15 L10 19 Z" fill="#8ab4e0" stroke="#3a6aa0" stroke-width="0.8"/><path d="M10 14 V2 M7 5 L10 1 L13 5" fill="none" stroke="#333" stroke-width="1.6"/></svg>
<svg class="a" style="left:923px;top:124px" width="22" height="20"><circle cx="13" cy="8" r="6" fill="#5a90cc" stroke="#2a5a90"/><circle cx="13" cy="8" r="3" fill="#f0c040"/><path d="M9 12 L3 18" stroke="#d0a040" stroke-width="3"/></svg>
<svg class="a" style="left:948px;top:124px" width="22" height="20"><circle cx="12" cy="8" r="6" fill="#e8f0f8" stroke="#3a6aa0" stroke-width="1.6"/><path d="M8 12 L2 18" stroke="#3a6aa0" stroke-width="3"/><path d="M12 4 V12 M8 8 H16" stroke="#555" stroke-width="0.9"/></svg>
<svg class="a" style="left:974px;top:124px" width="22" height="20"><rect x="8.5" y="0.5" width="12" height="11" fill="none" stroke="#555" stroke-dasharray="2 1"/><circle cx="11" cy="9" r="5" fill="#e8f0f8" stroke="#3a6aa0" stroke-width="1.6"/><path d="M7 13 L2 18" stroke="#3a6aa0" stroke-width="3"/></svg>
<svg class="a" style="left:1000px;top:124px" width="22" height="20"><path d="M3 17 L15 5 L19 9 L7 21 Z" fill="#d8d8d8" stroke="#666"/><path d="M8 14 H18" stroke="#2a6db5" stroke-width="2.4"/></svg>
<svg class="a" style="left:1026px;top:124px" width="22" height="20"><path d="M2 6 Q11 1 20 6 V17 Q11 21 2 17 Z" fill="#5a90cc" stroke="#2a4a80"/><path d="M8 6 V17 M14 6 V17" stroke="#e8e8e8" stroke-width="2"/></svg>
<svg class="a" style="left:1051px;top:124px" width="22" height="20"><path d="M2 16 L14 4 L18 8 L6 20 Z" fill="#d8d8d8" stroke="#666"/><path d="M12 2 L20 0 L16 8 Z" fill="#f0b030"/><text x="12" y="19" font-size="11" font-family="Liberation Serif" fill="#3a6aa0" font-weight="bold">A</text></svg>
<svg class="a" style="left:1078px;top:124px" width="22" height="20"><path d="M2 6 H14 V19 H2 Z" fill="#5a90cc" stroke="#2a4a80"/><path d="M2 6 L7 1 H19 V14 L14 19 M14 6 L19 1" fill="none" stroke="#555"/></svg>
<div class="a" style="left:1105px;top:133px;border-left:3px solid transparent;border-right:3px solid transparent;border-top:3px solid #666"></div>
<svg class="a" style="left:1119px;top:124px" width="22" height="20"><path d="M2 4 L9 1 L18 4 V16 L11 19 L2 16 Z" fill="#7aaad8" stroke="#3a6aa0"/><path d="M11 7 L18 4 V16 L11 19 Z" fill="#d8e8f4"/><path d="M2 4 L11 7 V19" fill="none" stroke="#3a6aa0"/></svg>
<div class="a" style="left:1145px;top:133px;border-left:3px solid transparent;border-right:3px solid transparent;border-top:3px solid #666"></div>
<svg class="a" style="left:1158px;top:124px" width="22" height="20"><path d="M1 10 Q11 1 21 10 Q11 19 1 10 Z" fill="#d8d8d8" stroke="#888"/><circle cx="11" cy="10" r="4" fill="#555"/></svg>
<div class="a" style="left:1186px;top:133px;border-left:3px solid transparent;border-right:3px solid transparent;border-top:3px solid #666"></div>
<svg class="a" style="left:1198px;top:124px" width="22" height="20"><circle cx="9" cy="9" r="8" fill="#3a9a3a"/><path d="M9 9 L1 9 A8 8 0 0 1 9 1 Z" fill="#c82a1e"/><path d="M9 9 V1 A8 8 0 0 1 17 9 Z" fill="#2a5aaa"/><path d="M9 19 L18 8 L20 10 L11 20 Z" fill="#f0c040" stroke="#886010" stroke-width="0.8"/></svg>
<svg class="a" style="left:1224px;top:124px" width="22" height="20"><circle cx="10" cy="8" r="7.5" fill="#3a9a3a"/><path d="M10 8 L2.5 8 A7.5 7.5 0 0 1 10 0.5 Z" fill="#c82a1e"/><path d="M10 8 V0.5 A7.5 7.5 0 0 1 17.5 8 Z" fill="#2a5aaa"/><rect x="2" y="13" width="17" height="7" fill="#333"/><path d="M4 13 V20 M8 13 V20 M12 13 V20 M16 13 V20" stroke="#ddd" stroke-width="1.5"/></svg>
<div class="a" style="left:1251px;top:133px;border-left:3px solid transparent;border-right:3px solid transparent;border-top:3px solid #666"></div>
<svg class="a" style="left:1265px;top:125px" width="22" height="18"><rect x="1.5" y="1.5" width="18" height="11" fill="#d8d8d8" stroke="#666"/><path d="M10.5 13 V16 M6 16.5 H15" stroke="#666" stroke-width="1.4"/></svg>
<div class="a" style="left:1292px;top:133px;border-left:3px solid transparent;border-right:3px solid transparent;border-top:3px solid #666"></div>
<svg class="a" style="left:1784px;top:127px" width="14" height="15"><rect x="0.5" y="0.5" width="12" height="13" fill="none" stroke="#8a8a8a"/><path d="M0.5 1 H12.5" stroke="#8a8a8a" stroke-width="1.5"/><path d="M6 4 L3 7 L6 10 Z" fill="#888"/></svg>
<svg class="a" style="left:1810px;top:127px" width="14" height="15"><rect x="0.5" y="0.5" width="12" height="13" fill="none" stroke="#8a8a8a"/><path d="M0.5 1 H12.5" stroke="#8a8a8a" stroke-width="1.5"/><path d="M7 4 L10 7 L7 10 Z" fill="#888"/></svg>
<div class="a" style="left:1837px;top:137px;width:10px;height:2px;background:#8a8a8a"></div>
<svg class="a" style="left:1861px;top:128px" width="14" height="12"><rect x="0.5" y="3.5" width="9" height="8" fill="none" stroke="#8a8a8a"/><path d="M3.5 3.5 V0.5 H12.5 V8.5 H9.5" fill="none" stroke="#8a8a8a"/></svg>
<svg class="a" style="left:1888px;top:128px" width="12" height="12"><path d="M1 1 L11 11 M11 1 L1 11" stroke="#999" stroke-width="1.3"/></svg>
<div class="a" style="left:1885px;top:177px;width:29px;height:209px;background:#cdcdcd;border-left:1px solid #8a8a8a;border-top:1px solid #8a8a8a;border-bottom:1px solid #8a8a8a"></div>
<div class="a" style="left:1886px;top:207px;width:28px;height:1px;background:#8f8f8f"></div>
<div class="a" style="left:1886px;top:237px;width:28px;height:1px;background:#8f8f8f"></div>
<div class="a" style="left:1886px;top:267px;width:28px;height:1px;background:#8f8f8f"></div>
<div class="a" style="left:1886px;top:297px;width:28px;height:1px;background:#8f8f8f"></div>
<div class="a" style="left:1886px;top:327px;width:28px;height:1px;background:#8f8f8f"></div>
<div class="a" style="left:1886px;top:357px;width:28px;height:1px;background:#8f8f8f"></div>
<div class="a" style="left:1886px;top:297px;width:28px;height:29px;background:#f2f2f2"></div>
<svg class="a" style="left:1891px;top:182px" width="20" height="20"><path d="M2 10 L10 2 L18 10" fill="none" stroke="#2a6db5" stroke-width="2.4"/><path d="M5 9 V18 H15 V9" fill="#fff" stroke="#333" stroke-width="1.2"/><rect x="8.5" y="12" width="3" height="6" fill="#fff" stroke="#333"/></svg>
<svg class="a" style="left:1891px;top:212px" width="20" height="20"><path d="M3 5 L7 3 V17 L3 18 Z M7 4 L11 2 V16 L7 17 M11 3 L15 1.5 V15 L11 16" fill="#eee" stroke="#333" stroke-width="1.1"/></svg>
<svg class="a" style="left:1891px;top:242px" width="20" height="20"><path d="M2 5 H8 L10 7 H16 V9 H6 L2 18 Z" fill="#ddd" stroke="#555"/><path d="M2 18 L6 9 H19 L15 18 Z" fill="#f4f4f4" stroke="#555"/></svg>
<svg class="a" style="left:1891px;top:272px" width="20" height="20"><rect x="1.5" y="2.5" width="16" height="14" fill="#f0f0f0" stroke="#555"/><path d="M4 6 H12 M8 6 V12 M5 12 H11" stroke="#e8a020" stroke-width="2.2"/><rect x="13" y="10" width="3" height="6" fill="#777"/></svg>
<svg class="a" style="left:1891px;top:302px" width="20" height="20"><circle cx="10" cy="10" r="8" fill="#e8c020"/><path d="M10 10 L2 10 A8 8 0 0 1 10 2 Z" fill="#2a5aaa"/><path d="M10 10 V2 A8 8 0 0 1 18 10 Z" fill="#c82a1e"/><path d="M10 10 L2 10 A8 8 0 0 0 10 18 Z" fill="#3a9a3a"/></svg>
<svg class="a" style="left:1891px;top:332px" width="20" height="20"><rect x="1.5" y="1.5" width="17" height="17" fill="#f6f6f6" stroke="#1a3f70"/><rect x="1.5" y="1.5" width="17" height="3" fill="#2a6db5"/><rect x="4" y="7" width="4" height="2.5" fill="#2a6db5"/><rect x="4" y="11" width="4" height="2.5" fill="#2a6db5"/><path d="M9 8 H16 M9 12 H16 M4 15.5 H16" stroke="#333"/></svg>
<svg class="a" style="left:1891px;top:362px" width="20" height="20"><path d="M1 3 H12 V11 H6 L3 14 V11 H1 Z" fill="#4a90d8" stroke="#2a5a90"/><path d="M8 8 H19 V16 H17 V19 L14 16 H8 Z" fill="#f4f4f4" stroke="#555"/></svg>
<div class="a" style="left:286px;top:557px;width:9px;height:39px;background:#f4f4f4;border:1px solid #555;border-left:none"></div><div class="a" style="left:287px;top:573px;width:6px;height:6px;border-radius:50%;background:#bbb;border:1px solid #777"></div>
<div class="a" style="left:1912px;top:119px;width:1px;height:58px;background:#b8b8b8"></div><div class="a" style="left:1912px;top:386px;width:1px;height:649px;background:#b8b8b8"></div>
<svg class="a" style="left:0;top:0" width="1914" height="1076" viewBox="0 0 1914 1076">
<g stroke="#1b0d08" stroke-width="1" stroke-linejoin="round">
<!-- dark body behind -->
<path d="M822 362 L874 381 L970 391 L1053 383 L1075 362 L1078 344 L1100 310 L1182 301 L1248 328 L1200 336 L1174 341 L1154 364 L1126 428 L1131 441 L960 445 L930 475 L885 560 L870 600 L858 655 L830 640 L812 612 L817 490 Z" fill="#2a2a2a"/>
<path d="M874 381 L970 391 L1053 383 L1075 362 L1075 396 L1126 416 L1131 441 L1116 430 L1049 403 L933 416 L907 437 L880 500 L871 520 Z" fill="#313131" stroke="none"/>
<path d="M874 381 L871 520 M970 391 L969 418 M1075 362 L1075 396 L1126 416" fill="none" stroke="#151515"/>
<path d="M1100 310 L1182 301 L1248 328 L1172 340 L1107 316 Z" fill="#3c3c3c"/>
<path d="M1077 344 L1100 310 L1107 315 L1083 349 Z" fill="#ee3410"/>
<path d="M1100 310 L1182 301 L1187 305 L1106 315 Z" fill="#ee3410"/>
<!-- dark foot -->
<path d="M786 607 L800 602 L813 604 L862 612 L862 650 L784 624 Z" fill="#222222"/>
<path d="M785 606 L792 603 L804 603 L812 607 L812 621 L785 611 Z" fill="#3e3e3e"/>
<path d="M780 626 L784 624 L862 650 L862 690 L824 676 L780 654 Z" fill="#b52c0e"/>
<path d="M780 630 L862 656" fill="none"/>
<!-- octagon cap -->
<path d="M823 347 L846 324 L1026 324 L1076 345 L1054 369 L970 378 L874 370 Z" fill="#ff2a00"/>
<path d="M823 347 L874 370 L874 381 L823 362 Z" fill="#c42a08"/>
<path d="M874 370 L970 378 L970 391 L874 381 Z" fill="#e22c04"/>
<path d="M970 378 L1054 369 L1053 383 L970 391 Z" fill="#e22c04"/>
<path d="M1054 369 L1076 345 L1075 362 L1053 383 Z" fill="#d42a06"/>
<!-- nut flange -->
<path d="M878 336 L886 332 L996 330 L1022 339 L1022 349 L1012 352 L1012 357 L960 364 L947 363 L909 360 L878 346 Z" fill="#cf2c06"/>
<path d="M878 336 L886 332 L996 330 L1022 339 L1012 346 L960 352 L947 351 L909 349 L888 342 Z" fill="#ff2c00"/>
<!-- nut hex -->
<path d="M886 321 L903 328 L924 327 L958 329 L988 327 L996 320 L995 337 L988 344 L958 348 L924 346 L903 348 L886 340 Z" fill="#d82c04"/>
<path d="M886 321 L907 318 L913 311 L943 308 L978 311 L996 320 L988 327 L958 329 L924 327 L903 328 Z" fill="#ff2c00"/>
<path d="M903 328 L903 348 M924 327 L924 346 M958 329 L958 348 M988 327 L988 344" fill="none"/>
<!-- right housing -->
<defs><linearGradient id="ring" x1="1" y1="0" x2="0" y2="1"><stop offset="0" stop-color="#e04018"/><stop offset="0.45" stop-color="#c23210"/><stop offset="1" stop-color="#8a200a"/></linearGradient></defs>
<path d="M1126 428 L1137 393 L1167 345 L1192 337 L1366 318 Q1385 320 1407 336 Q1432 350 1438 378 L1430 582 L1421 605 L1410 619 L1338 755 L1326 783 L1315 793 L1298 800 L1200 800 L1132 790 L1131 600 Z" fill="#b02a10"/>
<path d="M1167 345 L1192 337 L1366 318 Q1385 320 1407 336 Q1432 350 1438 378 L1432 378 Q1429 358 1407 348 L1235 366 L1200 372 L1186 358 Z" fill="#e83c12"/>
<path d="M1192 337 L1235 356 L1403 336 M1235 356 L1235 366" fill="none"/>
<path d="M1137 393 L1167 345 L1186 358 L1200 372 L1196 380 L1189 401 L1145 377 Z" fill="#d23816"/>
<path d="M1122 420 L1137 393 L1145 377 L1189 401 L1135 564 L1131 572 Z" fill="#a82810"/>
<path d="M1145 377 L1189 401 M1189 401 L1135 564 L1131 572 L1137 713 M1180 397 L1128 560" fill="none"/>
<path d="M1200 372 L1190 395 M1432 378 L1428 590 L1406 616 L1338 745" fill="none"/>
<path d="M1131 644 L1407 616 M1131 677 L1388 649 M1260 788 L1326 780 M1298 798 L1315 790" fill="none"/>
<ellipse cx="1312" cy="491" rx="111" ry="124" transform="rotate(-10 1312 491)" fill="url(#ring)"/>
<ellipse cx="1317" cy="495" rx="101" ry="117" transform="rotate(-10 1317 495)" fill="#a82a0e"/>
<!-- base -->
<path d="M759 773 L782 768 Q790 735 808 718 Q826 706 836 701 L1000 715 L1125 705 L1171 710 L1200 732 L1249 727 L1265 740 L1277 762 L1296 787 L1297 825 L1282 828 L1280 840 L1258 844 L1151 873 L1024 882 L888 871 L757 817 Z" fill="#c83412"/>
<path d="M782 768 Q790 735 808 718 Q826 706 836 701 L1000 715 L1125 705 L1171 710 L1200 732 L1249 727 L1265 740 L1277 762 L1280 770 Q1200 795 1039 797 Q900 792 783 771 Z" fill="#d83e16"/>
<path d="M826 678 L862 690 L858 660 L886 684 L929 694 L944 706 L1125 697 L1138 680 L1150 700 L1171 710 L1134 719 Q1120 733 1061 735 Q960 735 886 709 L846 706 L835 700 Z" fill="#dc4018" stroke="none"/>
<path d="M886 709 Q960 735 1061 735 Q1120 733 1134 719" fill="none"/>
<path d="M863 719 Q940 748 1061 749 Q1150 748 1166 737 L1174 714" fill="none"/>
<path d="M860 727 Q920 766 1061 768 Q1170 766 1200 740 L1197 730" fill="none"/>
<path d="M805 722 Q880 765 1035 779 Q1190 782 1254 745 L1249 728" fill="none"/>
<path d="M800 740 Q900 785 1061 795 Q1230 790 1270 766" fill="none"/>
<path d="M783 771 Q900 800 1039 805 Q1200 803 1280 775" fill="none"/>
<path d="M762 800 Q820 815 860 840 Q1000 866 1100 858 Q1200 850 1282 818" fill="none"/>
<path d="M885 869 L884 822 L896 816 L908 822 L909 876 M782 769 L806 787 L792 793 M826 796 L848 810 L856 858" fill="none"/>
<!-- front housing -->
<path d="M907 437 Q910 425 933 416 L1049 403 L1116 430 L1131 441 L1135 681 L1125 697 L944 706 L929 694 L886 684 L864 672 L858 657 L862 577 L868 550 Z" fill="#c8340f"/>
<path d="M933 416 L1049 403 L1116 430 L1000 442 L995 442 Z" fill="#ee3e12"/>
<path d="M995 442 L1116 430 L1131 441 L1000 453 L984 467 L969 464 Z" fill="#d23c16"/>
<path d="M910 427 Q914 421 933 416 L995 442 Q975 450 969 464 L907 437 Z" fill="#e24416"/>
<defs><linearGradient id="lside" x1="0" y1="0" x2="0" y2="1"><stop offset="0" stop-color="#d23a14"/><stop offset="0.45" stop-color="#9a2810"/><stop offset="1" stop-color="#8e240e"/></linearGradient></defs><path d="M907 437 L969 464 L952 520 L942 575 L868 550 Z" fill="url(#lside)"/>
<path d="M868 550 L942 575 L927 603 L862 577 Z" fill="#cf3a14"/>
<path d="M933 416 L995 442 L1116 430 M907 437 L969 464 L952 520 L942 575 L868 550 M969 464 L984 467" fill="none"/>
<path d="M944 706 L929 694 L928 605" fill="none"/>
<!-- blue faces -->
<path d="M998 452 L1114 440 Q1131 439 1132 458 L1124 676 Q1123 683 1114 684 L952 698 Q939 699 938 684 L941 595 L947 570 L982 468 Q988 453 998 452 Z" fill="#024eb0" stroke="#6aaaf0" stroke-width="1.5"/>
<path d="M862 577 L927 603 L924 681 L858 655 Z" fill="#04397f" stroke="#6aaaf0" stroke-width="1.5"/>
</g>
<path d="M1063 595 H1072 M1067.5 590.5 V599.5 M893 637 H902 M897.5 632.5 V641.5" stroke="#9ac0f0" stroke-width="1"/>
</svg>


<div class="a" style="left:250px;top:312px;width:494px;height:176px;border-radius:6px;background:#cfd8e0"></div>
<div class="a" style="left:251px;top:313px;width:492px;height:173px;border-radius:5px;background:#fc4346"></div>
<div class="a" style="left:264px;top:342px;font-size:31px;line-height:39px;color:#e2e6ec;letter-spacing:1.65px;-webkit-text-stroke:0.7px #fc4346">Pro Tip -<br>Use control to select a second<br>face which defines "up"</div>
<svg class="a" style="left:0;top:0" width="1914" height="1076">
<defs><filter id="sh" x="-20%" y="-20%" width="140%" height="140%"><feGaussianBlur stdDeviation="2"/></filter></defs>
<path d="M612 491 L866 640" stroke="#000" stroke-opacity="0.5" stroke-width="7" filter="url(#sh)" transform="translate(-3 4)"/>
<path d="M611 486 L866 634" stroke="#fc4346" stroke-width="10" stroke-linecap="round"/>
<path d="M890 648 L872 619 L857 645 Z" fill="#fc4346"/>
</svg>

<svg class="a" style="left:325px;top:900px" width="60" height="75" viewBox="0 0 60 75">
<path d="M11 18 L14 26 M17 18 L14 26 L14 30" stroke="#2a6a3a" stroke-width="1" fill="none"/>
<path d="M14 30 L9 40 L12 40 L12 64 L16 64 L16 40 L19 40 Z" fill="#1f6a2a"/>
<path d="M12 62 L40 58 L40 55 L49 61 L38 68 L38 65 L14 68 Z" fill="#d03018"/>
<path d="M10 63 L14 60 L34 72 L30 76 Z" fill="#1a3aaa"/>
<circle cx="30" cy="71" r="5" fill="#1e40c8"/>
<path d="M46 53 L53 64 M53 53 L46 64" stroke="#d03018" stroke-width="1"/>
<path d="M30 68 L36 68 L30 76 L37 76" stroke="#1a3aaa" stroke-width="1" fill="none"/>
</svg>
<svg class="a" style="left:779px;top:233px" width="14" height="22"><path d="M1.5 1.5 L1.5 17 L5 13.5 L8 20 L10.5 19 L7.5 12.5 L12.5 12.5 Z" fill="#fff" stroke="#333" stroke-width="1"/></svg>
<svg class="a" style="left:467px;top:788px" width="20" height="24"><path d="M6 13 V3 Q6 1 7.5 1 Q9 1 9 3 V10 M9 9 Q9 7.5 10.5 7.5 Q12 7.5 12 9 V11 M12 10 Q12 8.5 13.5 8.5 Q15 8.5 15 10 V12 M15 11 Q15 9.5 16.5 9.5 Q18 9.5 18 11 V17 Q18 22 13 22 H10 Q7 22 5 19 L2 14 Q1 12 3 12 Q4.5 12 6 14.5" fill="#fff" stroke="#333" stroke-width="1"/></svg>
<div id="btabs">
<div class="a" style="left:1px;top:1px;width:81px;height:19px;background:#8f94a6;border:1px solid #6f7386"></div>
<svg class="a" style="left:1px;top:1px" width="82" height="19"><path d="M20.5 0 V19 M40.5 0 V19 M60.5 0 V19" stroke="#6f7386"/><path d="M7 5 V14 M15 5 L9 9.5 L15 14 Z" stroke="#a9acba" fill="#a9acba"/><path d="M33 5 L27 9.5 L33 14 Z" fill="#a9acba"/><path d="M47 5 L53 9.5 L47 14 Z" fill="#a9acba"/><path d="M66 5 L72 9.5 L66 14 Z M74 5 V14" stroke="#a9acba" fill="#a9acba"/></svg>
<div class="a" style="left:82px;top:0;width:75px;height:20px;background:#f8f8f8"></div>
<div class="a" style="left:97px;top:1px;font-size:15.5px;font-weight:bold;color:#111">Model</div>
<div class="a" style="left:157px;top:0;width:90px;height:20px;background:#c2c2c2;border-left:1px solid #8a8a8a;border-right:1px solid #8a8a8a"></div>
<div class="a" style="left:169px;top:1px;font-size:15.5px;color:#222">3D Views</div>
<div class="a" style="left:247px;top:0;width:144px;height:20px;background:#c2c2c2;border-right:1px solid #8a8a8a"></div>
<div class="a" style="left:260px;top:1px;font-size:15.5px;color:#222">Motion Study 1</div>
</div>
<div id="status">
<div class="a" style="left:1472px;top:3px;font-size:14px;color:#222">Angle: 90.00deg</div>
<div class="a" style="left:1607px;top:2px;width:1px;height:17px;background:#cfcfcf"></div>
<div class="a" style="left:1614px;top:2px;width:1px;height:17px;background:#cfcfcf"></div>
<div class="a" style="left:1620px;top:3px;font-size:14px;color:#222">Editing Part</div>
<div class="a" style="left:1703px;top:2px;width:1px;height:17px;background:#cfcfcf"></div>
<div class="a" style="left:1718px;top:2px;width:1px;height:17px;background:#cfcfcf"></div>
<div class="a" style="left:1758px;top:3px;font-size:14px;color:#222">MMGS</div>
<div class="a" style="left:1827px;top:8px;border-left:3px solid transparent;border-right:3px solid transparent;border-bottom:3px solid #333"></div>
<svg class="a" style="left:1897px;top:1px" width="17" height="16"><path d="M2 6 L9 2 L16 5 V11 L9 15 L2 12 Z" fill="#e0e0e0" stroke="#444" stroke-width="1"/><path d="M2 6 L9 9 L16 5 M9 9 V15" fill="none" stroke="#444"/></svg>
</div>
</body></html>
